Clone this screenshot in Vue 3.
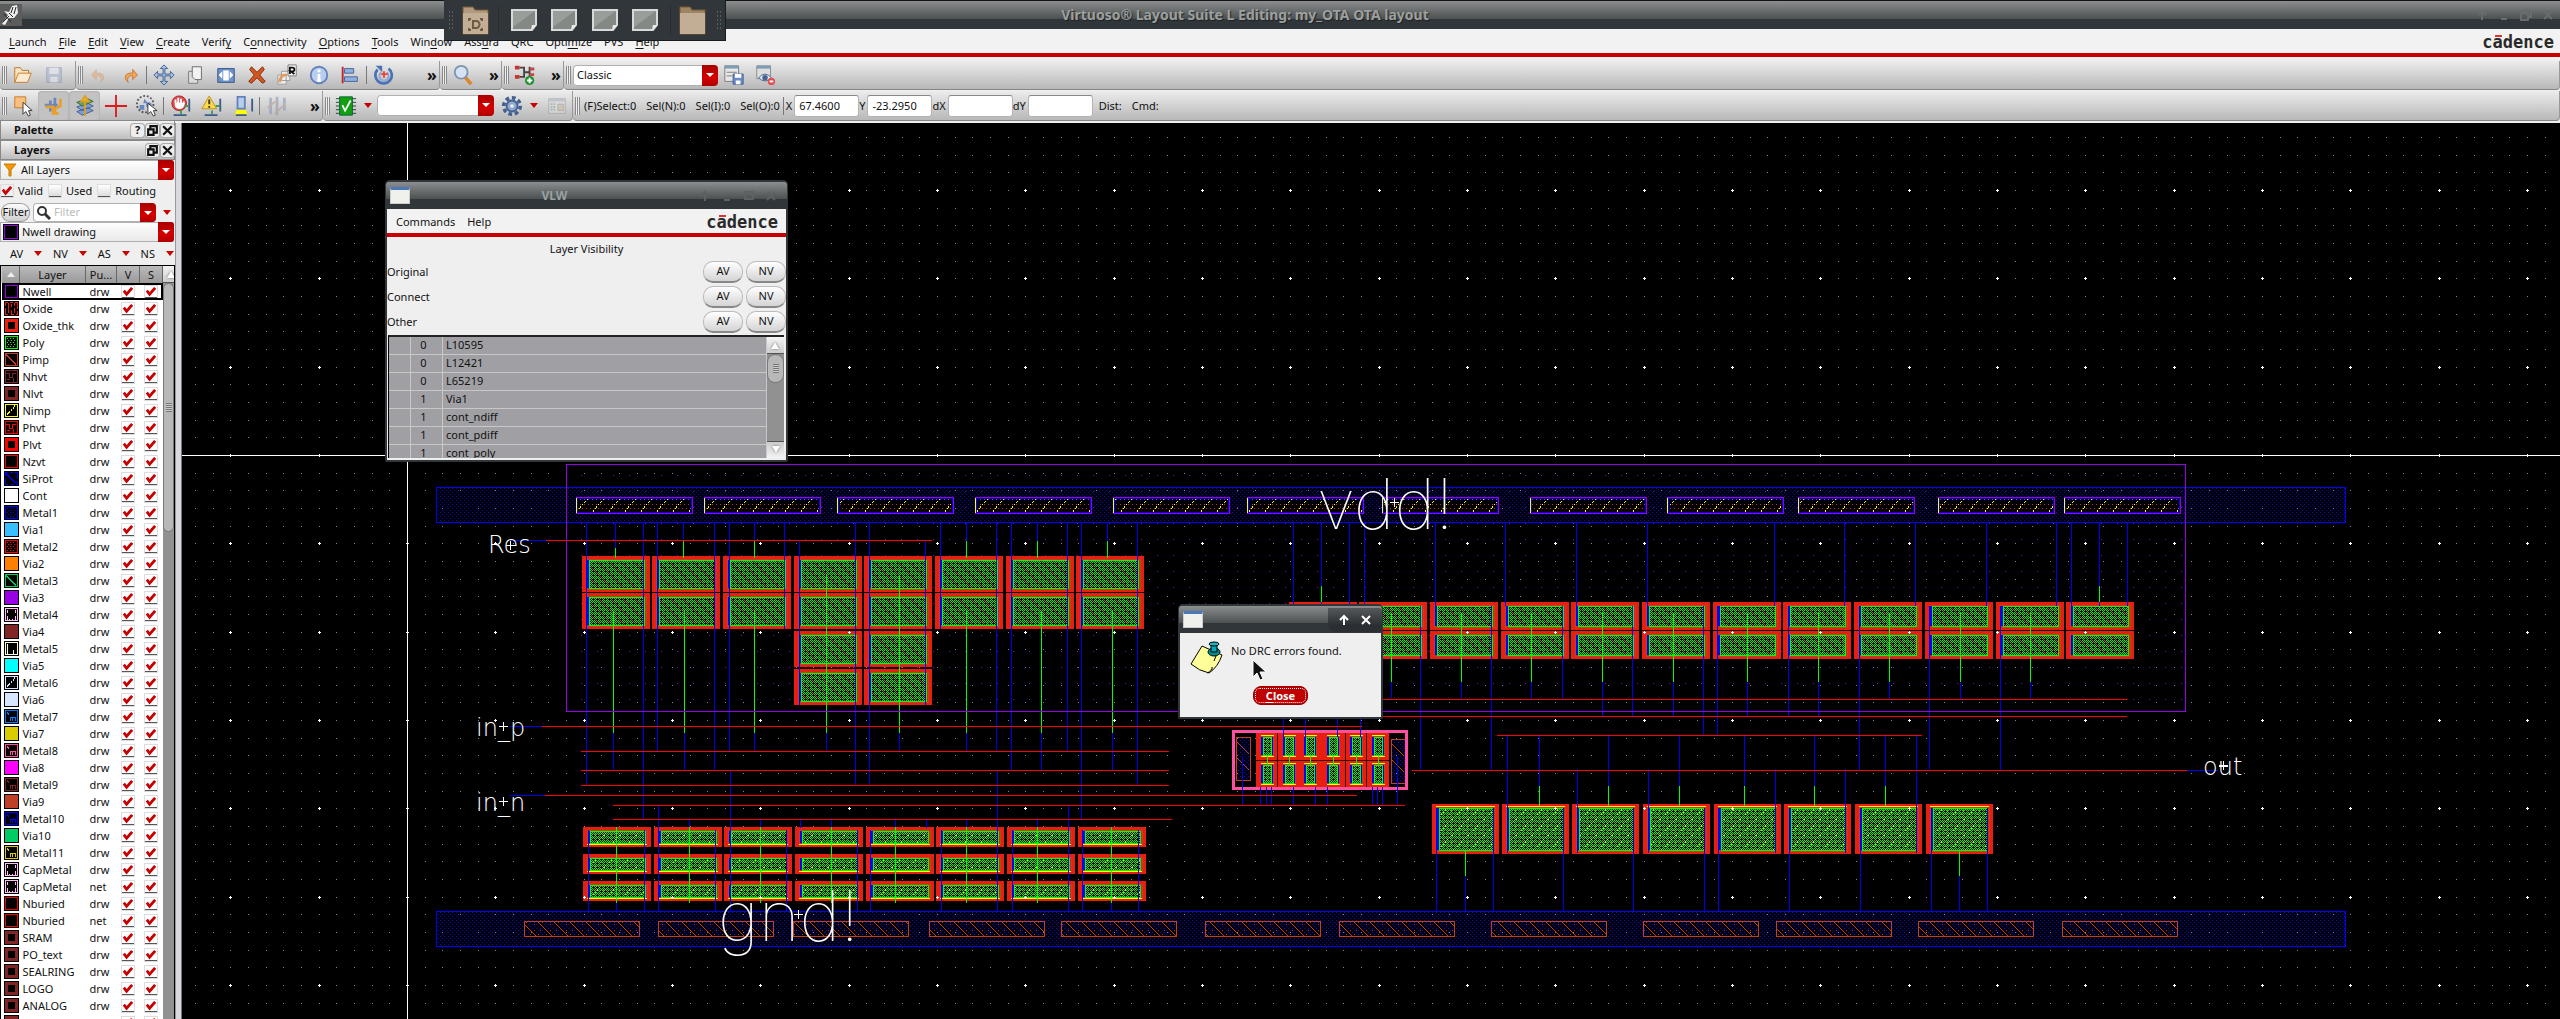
<script setup>
import { ref } from 'vue'

const menuParts = [
  ['', 'L', 'aunch'], ['', 'F', 'ile'], ['', 'E', 'dit'], ['', 'V', 'iew'], ['', 'C', 'reate'], ['Verif', 'y', ''],
  ['C', 'o', 'nnectivity'], ['', 'O', 'ptions'], ['', 'T', 'ools'], ['Win', 'd', 'ow'], ['Ass', 'u', 'ra'],
  ['QRC', '', ''], ['Opti', 'm', 'ize'], ['PVS', '', ''], ['', 'H', 'elp']
]

const palette = [
  ['Nwell', 'drw', '#9400e6', 'outline'], ['Oxide', 'drw', '#e81f0f', 'dash'], ['Oxide_thk', 'drw', '#f01f0f', 'thick'],
  ['Poly', 'drw', '#00ff00', 'dots'], ['Pimp', 'drw', '#c04026', 'diag'], ['Nhvt', 'drw', '#802626', 'maze'],
  ['Nlvt', 'drw', '#802626', 'thick'], ['Nimp', 'drw', '#ffff00', 'up'], ['Phvt', 'drw', '#ff0000', 'maze'],
  ['Plvt', 'drw', '#ff0000', 'thick'], ['Nzvt', 'drw', '#ff0000', 'outline'], ['SiProt', 'drw', '#0000ff', 'dashdiag'],
  ['Cont', 'drw', '#ffffff', 'solid'], ['Metal1', 'drw', '#0000ff', 'dots'], ['Via1', 'drw', '#39bfff', 'solid'],
  ['Metal2', 'drw', '#ff0000', 'dots'], ['Via2', 'drw', '#ff8000', 'solid'], ['Metal3', 'drw', '#00cc66', 'diag'],
  ['Via3', 'drw', '#9900e6', 'solid'], ['Metal4', 'drw', '#ffbff2', 'bars'], ['Via4', 'drw', '#802626', 'solid'],
  ['Metal5', 'drw', '#ffffcc', 'corner'], ['Via5', 'drw', '#00ffff', 'solid'], ['Metal6', 'drw', '#d9e6ff', 'up'],
  ['Via6', 'drw', '#d9e6ff', 'solid'], ['Metal7', 'drw', '#0080ff', 'em'], ['Via7', 'drw', '#d9cc00', 'solid'],
  ['Metal8', 'drw', '#ff4fa0', 'em'], ['Via8', 'drw', '#ff00ff', 'solid'], ['Metal9', 'drw', '#802626', 'em'],
  ['Via9', 'drw', '#bf4026', 'solid'], ['Metal10', 'drw', '#0000ff', 'em'], ['Via10', 'drw', '#00cc66', 'solid'],
  ['Metal11', 'drw', '#d9cc00', 'em'], ['CapMetal', 'drw', '#ffbff2', 'bars'], ['CapMetal', 'net', '#ffbff2', 'bars'],
  ['Nburied', 'drw', '#ff0000', 'outline'], ['Nburied', 'net', '#ff0000', 'outline'], ['SRAM', 'drw', '#802626', 'thick'],
  ['PO_text', 'drw', '#802626', 'thick'], ['SEALRING', 'drw', '#802626', 'thick'], ['LOGO', 'drw', '#802626', 'thick'],
  ['ANALOG', 'drw', '#802626', 'thick'], ['FUSE', 'drw', '#802626', 'thick']
]
const glyphs = {
  dash: 'M4 1v11M7 2v3M7 8v4M10 1v3M10 6v6',
  dots: 'M3 3h1M6 3h1M9 3h1M4 5h1M7 5h1M10 5h1M3 7h1M6 7h1M9 7h1M4 9h1M7 9h1M10 9h1M3 11h1M6 11h1M9 11h1',
  diag: 'M2 2l10 10',
  up: 'M3 11l3-3M7 7l1-1M9 5l2-3',
  maze: 'M1 4h4v4h3V4h4M3 10h3M9 8v4',
  dashdiag: 'M2 2l10 10',
  bars: 'M3 2v3M3 8v4M11 2v3M11 8v4M5 11v2M8 11v2',
  corner: 'M9 8v5M3 2v10',
  em: 'M6 11V8h5v3M8 8v3M3 3l2 2'
}

const vlwRows = [[0, 'L10595'], [0, 'L12421'], [0, 'L65219'], [1, 'Via1'], [1, 'cont_ndiff'], [1, 'cont_pdiff'], [1, 'cont_poly']]

const preset = ref('Classic')
const cursorX = ref('67.4600')
const cursorY = ref('-23.2950')

/* ---- layout canvas ---- */
const V = (x, a, b, w = 1) => `M${x} ${a}h${w}v${b - a}h-${w}z`
const H = (y, a, b, w = 1) => `M${a} ${y}h${b - a}v${w}h-${b - a}z`
const vs = (xs, a, b) => xs.map((x) => V(x, a, b)).join('')

const ox = 407
const oy = 455
const step = 53 / 3
let minor = ''
let major = ''
let ticks = ''
for (let j = -19; j <= 40; j++) {
  const y = oy + Math.round(j * step)
  for (let i = -13; i <= 130; i++) {
    const x = ox + Math.round(i * step)
    if (i % 5 === 0 && j % 5 === 0) major += `M${x - 1} ${y}h3v1h-3zM${x} ${y - 1}h1v3h-1z`
    else minor += `M${x} ${y}h1v1h-1z`
  }
}
for (let i = -10; i <= 130; i += 5) ticks += V(ox + Math.round(i * step), oy - 1, oy + 2)

const topTaps = [576, 704, 837, 975, 1113, 1247, 1382, 1530, 1667, 1798, 1938, 2064]
const bottomTaps = [524, 658, 793, 929, 1061, 1205, 1339, 1491, 1643, 1776, 1918, 2062]

const cells = []
const addCells = (xs, ys, w, h, kind) => xs.forEach((x) => ys.forEach((y) => cells.push({ x, y, w, h, kind })))
const colsA = [582, 652, 723, 794, 864, 935, 1006, 1076]
const colsC = [583, 654, 724, 795, 866, 936, 1007, 1078]
const colsB = [1289, 1359, 1430, 1501, 1571, 1642, 1713, 1783, 1854, 1925, 1996, 2066]
const colsD = [1432, 1502, 1572, 1643, 1714, 1784, 1855, 1926]
addCells(colsA, [556, 593], 68, 36, 'n')
addCells([794, 864], [631, 669], 68, 36, 'n')
addCells(colsB, [602, 631], 68, 28, 'n')
addCells(colsC, [827, 854, 881], 68, 20, 'p')
addCells(colsD, [804], 67, 50, 'p')
const pair = [1267, 1289, 1310, 1333, 1356, 1378]

const blue =
  vs([586, 855, 869, 1137], 523, 785) + vs([643, 1081], 523, 819) + vs([657, 729, 996, 1067], 523, 751) +
  vs([714, 1011], 523, 770) + vs([784, 940], 523, 629) + vs([799, 925], 540, 705) +
  vs([615], 523, 548) + vs([683, 754, 966, 1037, 1107], 523, 545) +
  vs([613, 684, 1041, 1112], 733, 770) + vs([754, 826, 899, 966], 733, 751) +
  vs([658, 1068], 805, 911) + vs([730, 997], 770, 911) +
  vs([689, 760, 800, 831, 895, 926, 966, 1037], 818, 828) +
  vs([588, 616, 644, 715, 786, 857, 870, 941, 1012, 1082, 1111, 1138], 830, 911) +
  vs([1293, 1321, 1349, 1364, 1435, 1505, 1576, 1647, 1774, 1844, 1915, 1986, 2056, 2071, 2099, 2127], 523, 606) +
  vs([1391, 1461, 1531, 1889], 682, 699) + vs([1562], 606, 699) +
  vs([1602, 1673, 1747, 1818], 682, 716) + vs([1632, 1788], 606, 716) +
  vs([1703, 1717], 606, 735) + vs([1420, 1491, 1859, 1929, 2000], 606, 770) + vs([1960, 2030], 682, 699) +
  vs([1539, 1608, 1679, 1744, 1814, 1885], 734, 786) + vs([1507, 1916], 734, 853) +
  vs([1577, 1648, 1775, 1845], 769, 853) +
  vs([1465, 1959], 876, 911) + vs([1436, 1493, 1563, 1633, 1704, 1718, 1789, 1860, 1931, 1987], 808, 911) +
  vs([1283, 1305, 1337, 1360], 719, 737) + vs([1242, 1397], 757, 805) +
  vs([1260, 1266, 1271, 1293, 1315, 1327, 1372, 1377, 1382], 787, 805) +
  H(540, 510, 546) + H(726, 510, 542) + H(795, 510, 545) + H(770, 2187, 2218)
const green =
  vs([613, 684, 754, 966, 1041, 1112], 611, 733) + vs([826, 899], 575, 733) + vs([615], 548, 558) +
  vs([683, 754, 966, 1037, 1107], 541, 558) +
  vs([616, 689, 760, 831, 895, 966, 1037, 1111], 827, 903) +
  vs([1321, 2099], 586, 602) + vs([1391, 1461, 1531, 1602, 1673, 1747, 1818, 1889, 1960, 2030], 613, 682) +
  vs([1539, 1608, 1679, 1744, 1814, 1885], 786, 806) + vs([1465, 1959], 851, 876) +
  vs([1267, 1289, 1310, 1333, 1356, 1378], 756, 765)
const red =
  H(540, 546, 932) + H(726, 542, 1362) + H(751, 581, 1169) + H(770, 581, 1169) + H(785, 581, 1169) +
  H(795, 545, 1357) + H(805, 613, 1405) + H(819, 613, 1172) + H(699, 1300, 2127) + H(716, 1300, 2127) +
  H(735, 1497, 1922) + H(770, 1412, 2187)
</script>

<template>
  <div class="app">
    <header class="titlebar">
      <svg class="applogo" width="22" height="22" viewBox="0 0 22 22"><rect width="22" height="22" fill="#5c5c5c" /><path d="M2 20L8 11L4 7L9 8L12 2L17 1L18 9L14 14L9 14L5 21z" fill="#eee" /><path d="M3 18l6-6M9 9l4 4M13 3l-2 6M16 3l-2 7M4 10l7 8" stroke="#222" fill="none" /></svg>
      <h1>Virtuoso® Layout Suite L Editing: my_OTA OTA layout</h1>
      <div class="wctl">
        <button aria-label="Shade"><svg width="12" height="12" viewBox="0 0 12 12"><path d="M6 11V2M2 6l4-4 4 4" /></svg></button>
        <button aria-label="Minimize"><svg width="12" height="12" viewBox="0 0 12 12"><path d="M3 10h6" /></svg></button>
        <button aria-label="Restore"><svg width="12" height="12" viewBox="0 0 12 12"><path d="M1 4h7v7H1zM4 4V1h7v7H8" /></svg></button>
        <button aria-label="Close window"><svg width="12" height="12" viewBox="0 0 12 12"><path d="M2 2l8 8M10 2l-8 8" /></svg></button>
      </div>
    </header>

    <nav class="menubar">
      <button v-for="m in menuParts" :key="m.join('')">{{ m[0] }}<u>{{ m[1] }}</u>{{ m[2] }}</button>
      <span class="brand">c<span class="macron">a</span>dence</span>
    </nav>

    <div class="toolbar">
      <div class="group">
        <i class="grip"></i>
        <button class="tool" aria-label="Open"><svg viewBox="0 0 24 24"><path d="M3 20V4h6l2 3h7v4" fill="#fbe3c0" stroke="#b8752c" /><path d="M3 20l4-10h14l-4 10z" fill="#fde9cf" stroke="#c77a25" /></svg></button>
        <button class="tool dim" aria-label="Save"><svg viewBox="0 0 24 24"><path d="M4 4h16v16H4z" fill="#a9b5cf" stroke="#8290b0" /><path d="M7 4h10v7H7zM8 14h8v6H8z" fill="#e3e6ee" /></svg></button>
        <i class="tail"></i>
      </div>
      <div class="group">
        <i class="grip"></i>
        <button class="tool dim" aria-label="Undo"><svg viewBox="0 0 24 24"><path d="M14 20c6-5 3-11-5-10V6l-5 6 5 5v-4c4-1 7 2 5 7z" fill="#e2ab83" stroke="#d09a70" /></svg></button>
        <button class="tool" aria-label="Redo"><svg viewBox="0 0 24 24"><path d="M10 20c-6-5-3-11 5-10V6l5 6-5 5v-4c-4-1-7 2-5 7z" fill="#f2a55c" stroke="#c9722a" /></svg></button>
        <i class="sep"></i>
        <button class="tool" aria-label="Move"><svg viewBox="0 0 24 24"><path d="M12 1l4 4h-3v6h6V8l4 4-4 4v-3h-6v6h3l-4 4-4-4h3v-6H5v3l-4-4 4-4v3h6V5H8z" fill="#a9c0e0" stroke="#3f5f92" /></svg></button>
        <button class="tool" aria-label="Copy"><svg viewBox="0 0 24 24"><path d="M5 8h10v13H5z" fill="#ddd" stroke="#777" /><path d="M9 3h10v14h-7l-3-3z" fill="#f2f2f2" stroke="#666" /></svg></button>
        <button class="tool" aria-label="Stretch"><svg viewBox="0 0 24 24"><path d="M3 5h18v15H3z" fill="#6d93cc" stroke="#33507f" /><path d="M9 7h6v11H9z" fill="#fff" /><path d="M4 12l4-4v8zM20 12l-4-4v8z" fill="#fff" /></svg></button>
        <button class="tool" aria-label="Delete"><svg viewBox="0 0 24 24"><path d="M6 3l6 6 6-6 2 3-5 6 6 7-3 2-6-6-6 6-3-2 6-7-5-6z" fill="#d2561f" stroke="#7c2a08" /></svg></button>
        <button class="tool" aria-label="Repeat copy"><svg viewBox="0 0 24 24"><path d="M1 12h9v10H1zM5 8h9v10H5z" fill="#eee" stroke="#999" /><path d="M12 1h9v12h-9z" fill="#f8f8f8" stroke="#777" /><path d="M14 11V4h3a2 2 0 0 1 0 4h-2l4 3" stroke="#111" stroke-width="2" fill="none" /><path d="M3 20c0-6 4-9 8-8" stroke="#e29a60" stroke-width="3" fill="none" /></svg></button>
        <button class="tool" aria-label="Properties"><svg viewBox="0 0 24 24"><circle cx="12" cy="12" r="9" fill="#b9cdef" stroke="#6382bd" stroke-width="2" /><path d="M12 6v3M12 11v7M10 18h4" stroke="#fff" stroke-width="3" /></svg></button>
        <button class="tool" aria-label="Align"><svg viewBox="0 0 24 24"><path d="M4 3v18" stroke="#c02030" stroke-width="2" /><path d="M6 5h10v5H6zM6 14h14v5H6z" fill="#8fb0e0" stroke="#44608f" /></svg></button>
        <i class="sep"></i>
        <button class="tool" aria-label="Rotate"><svg viewBox="0 0 24 24"><path d="M5 6a9 9 0 1 0 12-1" fill="none" stroke="#4a72b8" stroke-width="3" /><path d="M9 9a5 5 0 1 0 6 0" fill="none" stroke="#88a6d8" stroke-width="2" /><path d="M3 2h7v7z" fill="#4a72b8" /><path d="M9 11h7M12 8v7" stroke="#f04030" stroke-width="2" /></svg></button>
        <b class="more far">»</b>
      </div>
      <div class="group">
        <i class="grip"></i>
        <button class="tool" aria-label="Zoom"><svg viewBox="0 0 24 24"><path d="M14 14l7 8" stroke="#d8852c" stroke-width="4" /><circle cx="10" cy="9" r="7" fill="#d4e2f4" stroke="#7e93ad" stroke-width="2" /></svg></button>
        <b class="more">»</b>
      </div>
      <div class="group">
        <i class="grip"></i>
        <button class="tool" aria-label="Create wire"><svg viewBox="0 0 24 24"><path d="M1 2h5v4H1zM1 12h5v4H1z" fill="#c33" /><path d="M6 4h5v10H6M11 9h6M17 3v12M17 5h5" stroke="#444" stroke-width="2" fill="none" /><path d="M17 4h5v3h-5zM17 10h5v3h-5z" fill="#c44" /><circle cx="17" cy="18" r="5" fill="#18902c" /><path d="M14 18h6M17 15v6" stroke="#fff" stroke-width="2" /></svg></button>
        <b class="more">»</b>
      </div>
      <div class="group grow">
        <i class="grip"></i>
        <span class="combo wide"><select v-model="preset" aria-label="Workspace"><option>Classic</option></select><i class="drop"></i></span>
        <button class="tool" aria-label="Save workspace"><svg viewBox="0 0 24 24"><path d="M2 2h15v17H2z" fill="#e8e8e8" stroke="#777" /><path d="M2 2h15v3H2z" fill="#7d9cb8" /><path d="M4 9h11M4 13h6" stroke="#777" /><path d="M11 11h11v11H11z" fill="#6f8cc6" stroke="#3e5a98" /><path d="M13 11h7v4h-7zM14 18h5v4h-5z" fill="#fff" /></svg></button>
        <button class="tool" aria-label="Delete workspace"><svg viewBox="0 0 24 24"><path d="M3 2h15v14H3z" fill="#ddd" stroke="#888" /><path d="M3 2h15v3H3z" fill="#7d9cb8" /><path d="M5 15q7-8 14 0q-7 7-14 0z" fill="#dfe8f4" stroke="#47628f" /><circle cx="12" cy="15" r="3" fill="#47628f" /><circle cx="19" cy="19" r="4" fill="#e05050" /><path d="M17 19h4" stroke="#fff" stroke-width="2" /></svg></button>
      </div>
    </div>

    <div class="toolbar">
      <div class="group">
        <i class="grip"></i>
        <button class="tool" aria-label="Select"><svg viewBox="0 0 24 24"><path d="M3 2h12v12H3z" fill="#f9bf7c" stroke="#c07a28" /><path d="M12 8v13l3-3 3 5 2-1-2-5h4z" fill="#fff" stroke="#333" /></svg></button>
        <button class="tool on" aria-label="Partial select"><svg viewBox="0 0 24 24"><path d="M2 11h14M8 6v12M13 3v12" stroke="#6a86bd" stroke-width="3" /><path d="M3 13h8v7h6M19 4v8l-6 3v4" stroke="#e8a02a" stroke-width="3" fill="none" /></svg></button>
        <button class="tool on" aria-label="Layer scope"><svg viewBox="0 0 24 24"><path d="M3 18l12-4 6 3-12 5zM3 13l12-4 6 3-12 5z" fill="#7f9fd0" stroke="#3f5c8c" /><path d="M3 8l12-4 6 3-12 5z" fill="#6fa060" stroke="#40683a" /><path d="M12 23V5M8 7l4-6 4 6z" stroke="#e0a020" stroke-width="2" fill="#f5c24a" /></svg></button>
        <button class="tool" aria-label="Crosshair"><svg viewBox="0 0 24 24"><path d="M12 0v24M0 12h24" stroke="#e01818" stroke-width="2" /></svg></button>
        <button class="tool" aria-label="Area select"><svg viewBox="0 0 24 24"><circle cx="10" cy="10" r="9" fill="none" stroke="#555" stroke-width="2" stroke-dasharray="2 2" /><path d="M4 11h5v5H4zM9 4l4 5H8z" fill="#6587c4" /><circle cx="14" cy="11" r="3" fill="#6587c4" /><path d="M13 9v12l3-3 3 5 2-1-2-5h4z" fill="#fff" stroke="#333" /></svg></button>
        <i class="sep"></i>
        <button class="tool" aria-label="Stop rule"><svg viewBox="0 0 24 24"><path d="M21 4v14M4 22h14" stroke="#3d5a8c" stroke-width="2" /><circle cx="10" cy="9" r="8" fill="#e04a4a" stroke="#a02020" /><path d="M6 9V5M9 9V3M12 9V4M15 10V7M6 9c0 7 8 7 9 1z" stroke="#fff" stroke-width="2" fill="#fff" /><path d="M16 12h4M12 17v4" stroke="#3aa04a" stroke-width="2" /></svg></button>
        <button class="tool" aria-label="Warn rule"><svg viewBox="0 0 24 24"><path d="M21 4v14M4 22h14" stroke="#3d5a8c" stroke-width="2" /><path d="M9 1l8 14H1z" fill="#ffd94a" stroke="#b8901c" /><path d="M9 5v5M9 12v2" stroke="#333" stroke-width="2" /><path d="M16 12h4M12 17v4" stroke="#3aa04a" stroke-width="2" /></svg></button>
        <button class="tool" aria-label="Highlight"><svg viewBox="0 0 24 24"><path d="M6 2h8v13H6z" fill="#b9cdec" stroke="#6382bd" stroke-width="2" /><path d="M5 16h10l2 6H3z" fill="#ffff00" /><path d="M22 4v14M4 22h12" stroke="#3d5a8c" stroke-width="2" /></svg></button>
        <i class="sep"></i>
        <button class="tool dim" aria-label="Edit guides"><svg viewBox="0 0 24 24"><path d="M5 3v18M12 2v20M20 3v14" stroke="#8c9ab5" stroke-width="3" /><path d="M2 14l8-7M10 20l11-10" stroke="#b89a88" stroke-width="2" /></svg></button>
        <b class="more mid">»</b>
      </div>
      <div class="group">
        <i class="grip"></i>
        <button class="tool" aria-label="Check design"><svg viewBox="0 0 24 24"><path d="M1 4h22M1 8h22M1 12h22M1 16h22M1 20h22" stroke="#333" /><path d="M5 2h14v20H5z" fill="#12a012" stroke="#063" /><path d="M8 11l3 6 6-11" stroke="#fff" stroke-width="2" fill="none" /></svg></button>
        <i class="tri"></i>
        <span class="combo rule"><select aria-label="Rule"><option></option></select><i class="drop"></i></span>
        <button class="tool" aria-label="Options"><svg viewBox="0 0 24 24"><circle cx="12" cy="12" r="9" fill="none" stroke="#43618f" stroke-width="4" stroke-dasharray="4 3" /><circle cx="12" cy="12" r="6" fill="#8fa9d0" stroke="#43618f" stroke-width="2" /><circle cx="12" cy="12" r="2" fill="#eee" /></svg></button>
        <i class="tri"></i>
        <button class="tool dim" aria-label="Form"><svg viewBox="0 0 24 24"><path d="M3 4h18v16H3z" fill="#ddd" stroke="#999" /><path d="M3 4h18v3H3z" fill="#aab4c0" /><path d="M5 10h5M5 13h5M5 16h5" stroke="#8a9" stroke-width="2" stroke-dasharray="2 1" /><path d="M13 10h6v7h-6z" fill="#cfc09a" stroke="#999" /></svg></button>
      </div>
      <div class="group grow status">
        <i class="grip"></i>
        <span class="st first">(F)Select:0</span><span class="st">Sel(N):0</span><span class="st">Sel(I):0</span><span class="st">Sel(O):0</span>
        <i class="bar"></i>
        <label>X<input v-model="cursorX" /></label>
        <label>Y<input v-model="cursorY" /></label>
        <label>dX<input /></label>
        <label>dY<input /></label>
        <span class="st dist">Dist:</span><span class="st">Cmd:</span>
      </div>
    </div>

    <main class="body">
      <aside class="side">
        <div class="dock"><b>Palette</b><button aria-label="Help">?</button><button aria-label="Float palette"><svg viewBox="0 0 12 12"><path d="M2 5h5v5H2zM4 5V2h6v6H7" /></svg></button><button aria-label="Close palette"><svg viewBox="0 0 12 12"><path d="M2 2l8 8M10 2l-8 8" /></svg></button></div>
        <div class="dock"><b>Layers</b><button aria-label="Float layers"><svg viewBox="0 0 12 12"><path d="M2 5h5v5H2zM4 5V2h6v6H7" /></svg></button><button aria-label="Close layers"><svg viewBox="0 0 12 12"><path d="M2 2l8 8M10 2l-8 8" /></svg></button></div>
        <div class="combo full">
          <svg class="lead" width="14" height="14" viewBox="0 0 14 14"><path d="M1 1h12L8 7v6H6V7z" fill="#f59a00" stroke="#c87800" /></svg>
          <select aria-label="Layer set"><option>All Layers</option></select><i class="drop"></i>
        </div>
        <div class="checks">
          <label><input type="checkbox" checked />Valid</label>
          <label><input type="checkbox" />Used</label>
          <label><input type="checkbox" />Routing</label>
        </div>
        <div class="filter">
          <button class="pill">Filter</button>
          <span class="combo search">
            <svg class="lead" width="15" height="15" viewBox="0 0 15 15"><circle cx="6" cy="6" r="4" fill="none" stroke="#333" stroke-width="2" /><path d="M9 9l5 5" stroke="#333" stroke-width="3" /></svg>
            <input placeholder="Filter" aria-label="Filter layers" /><i class="drop"></i>
          </span>
          <i class="tri"></i>
        </div>
        <div class="combo full">
          <i class="chip"></i>
          <select aria-label="Current layer"><option>Nwell drawing</option></select><i class="drop"></i>
        </div>
        <div class="vis">
          <button v-for="n in ['AV', 'NV', 'AS', 'NS']" :key="n">{{ n }}<i class="tri"></i></button>
        </div>
        <div class="list">
          <table>
            <thead>
              <tr><th class="c0"><i class="up"></i></th><th class="c1">Layer</th><th class="c2">Pu...</th><th class="c3">V</th><th class="c4">S</th></tr>
            </thead>
            <tbody>
              <tr v-for="(l, i) in palette" :key="i" :class="{ sel: i === 0 }">
                <td>
                  <svg class="sw" width="15" height="15" viewBox="0 0 15 15" shape-rendering="crispEdges">
                    <rect width="15" height="15" fill="#000" />
                    <rect x="1" y="1" width="13" height="13" :fill="l[2]" />
                    <template v-if="l[3] !== 'solid'">
                      <rect v-if="l[3] === 'thick'" x="4" y="4" width="7" height="7" fill="#000" />
                      <rect v-else x="2" y="2" width="11" height="11" fill="#000" />
                      <path v-if="glyphs[l[3]]" :d="glyphs[l[3]]" :stroke="l[2]" fill="none" transform="translate(0 .5)" />
                      <path v-if="l[3].startsWith('dash')" d="M4 1h2M9 1h2M4 13h3M10 13h2M1 5v2M13 8v2" stroke="#000" stroke-width="2" />
                    </template>
                  </svg>
                </td>
                <td class="nm">{{ l[0] }}</td>
                <td class="pu">{{ l[1] }}</td>
                <td class="ck"><input type="checkbox" checked :aria-label="l[0] + ' visible'" /></td>
                <td class="ck"><input type="checkbox" checked :aria-label="l[0] + ' selectable'" /></td>
              </tr>
            </tbody>
          </table>
          <div class="scroll"><i class="sbtn"></i><i class="thumb tall"></i></div>
        </div>
      </aside>
      <div class="split"></div>

      <section class="canvas">
        <svg class="art" width="100%" height="100%" shape-rendering="crispEdges">
          <defs>
            <pattern id="well" x="581" y="475" width="16" height="16" patternUnits="userSpaceOnUse"><path d="M0 0h1v1h-1z" fill="#8a00d8" /></pattern>
            <pattern id="metalTop" width="4" height="4" patternUnits="userSpaceOnUse"><path d="M0 0h1v1h-1zM2 2h1v1h-1z" fill="#0000e0" /></pattern>
            <pattern id="metalLow" width="4" height="4" patternUnits="userSpaceOnUse"><path d="M0 0h1v1h-1zM2 2h1v1h-1z" fill="#0000ff" /></pattern>
            <pattern id="tapN" width="16" height="16" patternUnits="userSpaceOnUse"><path d="M0 3h1v1h-1zM4 3h1v1h-1zM8 3h1v1h-1zM12 3h1v1h-1zM0 8h1v1h-1zM4 8h1v1h-1zM8 8h1v1h-1zM12 8h1v1h-1zM2 12h1v1h-1zM6 12h1v1h-1zM10 12h1v1h-1zM14 12h1v1h-1z" fill="#c83020" /><path d="M1 14h1v2h-1zM3 12h1v1h-1zM4 10h1v2h-1zM6 8h1v1h-1zM8 6h1v1h-1zM9 5h1v1h-1zM11 3h1v1h-1zM13 1h1v1h-1zM14 0h1v1h-1z" fill="#ffff00" /></pattern>
            <pattern id="tapP" width="16" height="16" patternUnits="userSpaceOnUse"><path d="M0 0L16 16" stroke="#c04026" fill="none" /><path d="M2 6h1v1h-1zM6 2h1v1h-1zM10 6h1v1h-1zM14 10h1v1h-1zM6 12h1v1h-1zM12 2h1v1h-1z" fill="#e02018" /></pattern>
            <pattern id="poly" width="4" height="4" patternUnits="userSpaceOnUse"><rect width="4" height="4" fill="#000" /><path d="M0 0h1v1h-1zM2 0h1v1h-1zM1 1h1v1h-1zM0 2h1v1h-1zM2 2h1v1h-1zM3 3h1v1h-1zM3 1h1v1h-1z" fill="#00f800" /></pattern>
            <pattern id="diagN" width="12" height="12" patternUnits="userSpaceOnUse"><path d="M0 0h1v1h-1zM1 1h1v1h-1zM3 3h1v1h-1zM4 4h1v1h-1zM5 5h1v1h-1zM7 7h1v1h-1zM8 8h1v1h-1zM9 9h1v1h-1zM11 11h1v1h-1z" fill="#d04026" /></pattern>
            <pattern id="diagP" width="16" height="16" patternUnits="userSpaceOnUse"><path d="M1 14h1v1h-1zM3 12h1v1h-1zM5 9h1v2h-1zM7 7h1v1h-1zM9 5h1v1h-1zM11 3h2v1h-2zM13 1h1v1h-1z" fill="#e8e000" /><path d="M3 2h1v1h-1zM7 3h1v1h-1zM11 10h1v1h-1zM15 11h1v1h-1zM9 14h1v1h-1zM14 6h1v1h-1zM2 8h1v1h-1z" fill="#e85010" /></pattern>
          </defs>
          <g transform="translate(-182 -123)">
            <path :d="minor" fill="#85858f" />
            <rect x="566" y="464" width="1619" height="247" fill="url(#well)" />
            <g stroke="#0000ff">
              <rect x="436" y="487" width="1909" height="35" fill="url(#metalTop)" />
              <rect x="436" y="911" width="1909" height="35" fill="url(#metalLow)" />
            </g>
            <g v-for="x in topTaps" :key="'t' + x">
              <rect :x="x" y="497" width="117" height="17" fill="#9400e6" />
              <rect :x="x + 1" y="498" width="115" height="15" fill="#0000e0" />
              <rect :x="x + 2" y="499" width="113" height="13" fill="#000" />
              <rect :x="x + 2" y="499" width="113" height="13" fill="url(#tapN)" />
              <path :d="'M' + x + ' 498h1v15h-1z'" fill="#ffff00" />
            </g>
            <g v-for="x in bottomTaps" :key="'b' + x">
              <rect :x="x" y="921" width="115" height="15" fill="url(#tapP)" stroke="#c04026" />
            </g>
            <g v-for="(c, i) in cells" :key="i">
              <rect :x="c.x" :y="c.y" :width="c.w" :height="c.h" fill="#e81f0f" />
              <rect :x="c.x + 4" :y="c.y + 3" :width="c.w - 8" :height="c.h - 6" fill="none" stroke="#c04026" />
              <path v-if="c.kind === 'p'" :d="'M' + (c.x + 4) + ' ' + (c.y + (c.h > 30 ? 2 : c.h - 3)) + 'h' + (c.w - 8) + 'v1h-' + (c.w - 8) + 'z'" fill="#ffff00" />
              <rect :x="c.x + 5" :y="c.y + 4" :width="c.w - 10" :height="c.h - 8" fill="#0000ff" />
              <rect :x="c.x + 7" :y="c.y + 4" :width="c.w - 13" :height="c.h - 8" fill="url(#poly)" />
              <rect :x="c.x + 7" :y="c.y + 4" :width="c.w - 13" :height="c.h - 8" :fill="c.kind === 'p' ? 'url(#diagP)' : 'url(#diagN)'" stroke="#00ff00" />
            </g>
            <rect x="1256" y="733" width="133" height="54" fill="#e81f0f" />
            <path d="M1256 760h133v1h-133zM1277 733h1v54h-1zM1345 733h1v54h-1zM1366 733h1v54h-1z" fill="#300" />
            <g v-for="x in pair" :key="'p' + x">
              <template v-for="y in [737, 765]" :key="y">
                <rect :x="x - 6" :y="y - 2" width="13" height="22" fill="#ffff00" />
                <rect :x="x - 6" :y="y - 1" width="13" height="20" fill="#c04026" />
                <rect :x="x - 6" :y="y" width="12" height="18" fill="#0000ff" />
                <rect :x="x - 4" :y="y" width="8" height="18" fill="url(#poly)" stroke="#00ff00" />
              </template>
            </g>
            <g stroke="#c04026">
              <rect x="1236" y="737" width="14" height="43" fill="url(#metalLow)" />
              <rect x="1391" y="739" width="14" height="44" fill="url(#metalLow)" />
              <path d="M1237 742l12 12M1237 758l12 12M1392 744l12 12M1392 760l12 12" />
            </g>
            <rect x="1233" y="731" width="173" height="57" fill="none" stroke="#ff4fa0" stroke-width="3" />
            <path :d="blue" fill="#0000f0" />
            <path :d="green" fill="#00ff00" />
            <path :d="red" fill="#ff0000" />
            <rect x="566" y="464" width="1619" height="247" fill="none" stroke="#9400e6" />
            <path :d="major" fill="#fff" />
            <path :d="ticks" fill="#fff" />
            <path d="M407 123h1v2000h-1zM182 455h4000v1h-4000z" fill="#fff" />
            <g class="pins">
              <text x="488" y="553">Res</text><text x="476" y="736">in_p</text><text x="476" y="811">in_n</text><text x="2203" y="775">out</text>
              <path d="M506 545h9v1h-9zM510 541h1v9h-1zM499 726h9v1h-9zM503 722h1v9h-1zM499 801h9v1h-9zM503 797h1v9h-1zM2219 765h9v2h-9zM2223 761h1v9h-1zM1390 502h9v1h-9zM1394 498h1v9h-1zM794 914h9v1h-9zM798 910h1v9h-1z" />
              <text class="big" x="1317" y="529">vdd!</text><text class="big" x="718" y="941">gnd!</text>
            </g>
          </g>
        </svg>
      </section>
    </main>

    <div class="panel">
      <i class="dotgrip"></i>
      <svg width="28" height="32" viewBox="0 0 28 32"><path d="M1 3h10l2 3h13v24H1z" fill="#b19a7d" stroke="#7a5b37" /><path d="M1 9h25v21H1z" fill="#c2ae94" /><path d="M9 15h-2v2M18 15h2v2M9 26h-2v-2M18 26h2v-2M11 17h3a3 3 0 0 1 0 7h-3z" stroke="#6e5a42" fill="none" stroke-width="2" /></svg>
      <i class="psep"></i>
      <svg v-for="n in 4" :key="n" class="scr" width="28" height="24" viewBox="0 0 28 24"><path d="M2 2h24v15l-4 5H2z" fill="#858985" stroke="#d8dad8" stroke-width="2" /><path d="M3 3h22L3 19z" fill="#9a9e9a" /><path d="M21 22l1-5h4z" fill="#eee" /></svg>
      <i class="psep"></i>
      <svg width="28" height="32" viewBox="0 0 28 32"><path d="M1 3h10l2 3h13v24H1z" fill="#9d8465" stroke="#7a5b37" /><path d="M1 9h25v21H1z" fill="#c2ae94" /></svg>
      <i class="dotgrip"></i>
    </div>

    <section class="win vlw">
      <header><i class="wicon"></i><b>VLW</b>
        <div class="wctl">
          <button aria-label="Shade VLW"><svg width="12" height="12" viewBox="0 0 12 12"><path d="M6 11V2M2 6l4-4 4 4" /></svg></button>
          <button aria-label="Minimize VLW"><svg width="12" height="12" viewBox="0 0 12 12"><path d="M3 10h6" /></svg></button>
          <button aria-label="Maximize VLW"><svg width="12" height="12" viewBox="0 0 12 12"><path d="M2 2h8v7H2z" /></svg></button>
          <button aria-label="Close VLW"><svg width="12" height="12" viewBox="0 0 12 12"><path d="M2 2l8 8M10 2l-8 8" /></svg></button>
        </div>
      </header>
      <nav><button>Commands</button><button>Help</button><span class="brand">c<span class="macron">a</span>dence</span></nav>
      <h2>Layer Visibility</h2>
      <div v-for="n in ['Original', 'Connect', 'Other']" :key="n" class="vrow"><span>{{ n }}</span><button>AV</button><button>NV</button></div>
      <div class="vlist">
        <table><tbody><tr v-for="r in vlwRows" :key="r[1]"><td class="a"></td><td class="b">{{ r[0] }}</td><td>{{ r[1] }}</td></tr></tbody></table>
        <div class="scroll"><i class="sbtn"></i><i class="thumb"></i><i class="sbtn down"></i></div>
      </div>
    </section>

    <section class="win drc" role="dialog">
      <header><i class="wicon"></i>
        <div class="wctl lit">
          <button aria-label="Shade dialog"><svg width="12" height="12" viewBox="0 0 12 12"><path d="M6 11V2M2 6l4-4 4 4" /></svg></button>
          <button aria-label="Close dialog"><svg width="12" height="12" viewBox="0 0 12 12"><path d="M2 2l8 8M10 2l-8 8" /></svg></button>
        </div>
      </header>
      <div class="msg">
        <svg width="34" height="34" viewBox="0 0 34 34"><path d="M12 5L1 23Q9 30 19 32Q28 26 32 14z" fill="#ffff99" stroke="#000" /><path d="M17 32q6-2 5-6" fill="#ddd08a" stroke="#000" /><path d="M24 20l2-5" stroke="#000" /><ellipse cx="24" cy="11" rx="6" ry="4" fill="#008b95" stroke="#000" /><path d="M21 4h6v7h-6z" fill="#00a8b0" stroke="#000" /><ellipse cx="24" cy="3" rx="5" ry="2" fill="#20b8c0" stroke="#000" /></svg>
        <p>No DRC errors found.</p>
      </div>
      <button class="close"><span><u>C</u>lose</span></button>
      <svg class="cursor" width="16" height="22" viewBox="0 0 16 22"><path d="M1 1v17l4-4 3 7 3-1-3-7h6z" fill="#111" stroke="#fff" /></svg>
    </section>
  </div>
</template>

<style>
html, body { margin: 0; background: #000; }
</style>

<style scoped>
.app { position: relative; display: flex; flex-direction: column; height: 100vh; overflow: hidden; font-family: "Noto Sans", "Open Sans", sans-serif; font-size: 11px; line-height: 16px; color: #111; background: #efefef; }
button, input, select { font: inherit; color: inherit; margin: 0; padding: 0; border: 0; background: none; box-sizing: border-box; }
i { font-style: normal; display: block; flex: none; }
u { text-underline-offset: 2px; }

.titlebar { display: flex; align-items: center; height: 29px; flex: none; background: linear-gradient(#101214 0 1px, #8c8e8f 1px, #4b5051 19px, #31363a 19px, #31363a); }
.titlebar h1 { flex: 1; margin: 0 8px 0 0; text-align: center; font-size: 14px; font-weight: 700; color: #9ba0a1; text-shadow: 1px 1px 1px #222; }
.wctl { display: flex; gap: 10px; margin-right: 6px; }
.wctl button { width: 12px; height: 12px; }
.wctl svg { display: block; fill: none; stroke: #686c6d; stroke-width: 2; }
.wctl.lit svg { stroke: #fff; }

.menubar { display: flex; align-items: center; height: 22px; flex: none; padding: 2px 0 0 9px; gap: 12px; background: #f2f2f2; border-bottom: 4px solid #c80000; }
.brand { margin-left: auto; margin-right: 6px; font: 700 17px/20px "DejaVu Sans Mono", monospace; color: #2a2a2a; }
.macron { position: relative; }
.macron::after { content: ""; position: absolute; left: 2px; top: 3px; width: 7px; height: 2px; background: #e03030; }

.toolbar { display: flex; height: 30px; flex: none; margin-top: 1px; }
.menubar + .toolbar { margin-top: 4px; height: 29px; }
.group { display: flex; align-items: center; box-sizing: border-box; background: linear-gradient(#ececec, #b8b8b8); border-bottom: 1px solid #858585; border-right: 1px solid #999; border-radius: 0 0 4px 4px; }
.grow { flex: 1; }
.grip { width: 5px; height: 18px; margin-left: 2px; background: repeating-linear-gradient(90deg, #8a8a8a 0 1px, #eee 1px 2px); }
.tool { width: 31px; height: 30px; display: flex; align-items: center; justify-content: center; }
.tool svg { width: 22px; height: 22px; }
.tool.on { background: #c2c2c2; border-radius: 4px; box-shadow: inset 0 0 2px #999; }
.dim { opacity: .6; }
.sep { width: 1px; height: 18px; background: #777; margin: 0 1px; }
.tail { width: 6px; }
.more { width: 14px; margin-left: 9px; text-align: center; font-size: 16px; }
.more.far { margin-left: 26px; }
.more.mid { margin-left: 16px; }
.combo { display: flex; align-items: center; box-sizing: border-box; background: #fff; border-radius: 4px; overflow: hidden; box-shadow: inset 0 0 0 1px #b0b0b0; }
.combo select { appearance: none; flex: 1; min-width: 0; height: 100%; padding-left: 4px; }
.drop { align-self: stretch; width: 16px; background: linear-gradient(#a80000, #d40000 60%, #b00000); position: relative; }
.drop::after { content: ""; position: absolute; left: 4px; top: 8px; border: 4px solid transparent; border-top-color: #fff; border-bottom: 0; }
.wide { width: 145px; height: 21px; margin-left: 2px; }
.rule { width: 117px; height: 21px; margin: 0 2px; }
.tri { border: 4px solid transparent; border-top: 5px solid #c80000; border-bottom: 0; }
.group > .tri { margin: 0 3px; }
.status .first { margin-left: 4px; }
.st { margin-right: 10px; }
.status .bar { width: 1px; height: 18px; background: #777; margin: 0 2px 0 -7px; }
.status label { display: flex; align-items: center; gap: 2px; }
.status input { width: 65px; height: 22px; padding-left: 4px; background: #fff; border: 1px solid #b4b4b4; border-top: 1px solid #888; border-radius: 3px; }
.dist { margin-left: 6px; }

.body { flex: 1; display: flex; min-height: 0; margin-top: 2px; }
.side { width: 175px; flex: none; display: flex; flex-direction: column; margin-top: -3px; }
.split { width: 7px; flex: none; background: #d8dadd; border-left: 1px solid #999; border-right: 1px solid #777; box-sizing: border-box; }
.dock { display: flex; align-items: center; height: 20px; flex: none; box-sizing: border-box; padding-left: 13px; gap: 2px; background: linear-gradient(#f2f2f2, #bdbdbd); border: 1px solid #888; }
.dock b { flex: 1; }
.dock button { width: 13px; height: 13px; border-radius: 3px; box-shadow: 0 0 0 1px #aaa; background: #eee; font-weight: 700; line-height: 12px; }
.dock svg { display: block; width: 13px; height: 13px; fill: none; stroke: #111; stroke-width: 2; }
.full { height: 20px; flex: none; border-radius: 0; margin-right: 1px; }
.full.combo { background: linear-gradient(#fff, #e8e8e8); border-radius: 0 3px 3px 0; }
.lead { margin-left: 3px; flex: none; }
.chip { width: 12px; height: 12px; border: 1px solid #9400e6; background: #000; outline: 1px solid #000; margin-left: 4px; }
.checks { display: flex; align-items: center; height: 22px; gap: 6px; padding-left: 1px; }
.checks label { display: flex; align-items: center; gap: 5px; }
input[type="checkbox"] { appearance: none; flex: none; width: 12px; height: 12px; background: linear-gradient(#fff, #ddd); border-bottom: 1px solid #555; box-shadow: 0 0 0 1px #ddd; }
input[type="checkbox"]:checked { background: linear-gradient(#fff, #ddd); background-image: url("data:image/svg+xml,%3Csvg xmlns='http://www.w3.org/2000/svg' viewBox='0 0 12 12'%3E%3Cpath d='M2 5l3 4 6-7' stroke='%23c80000' stroke-width='3' fill='none'/%3E%3C/svg%3E"); }
.filter { display: flex; align-items: center; height: 20px; gap: 3px; padding-left: 1px; }
.pill { width: 29px; height: 19px; border-radius: 9px; background: linear-gradient(#fff, #ccc); box-shadow: inset 0 0 0 1px #999; }
.search { width: 123px; height: 19px; }
.search input { flex: 1; min-width: 0; padding-left: 3px; }
.search input::placeholder { color: #bbb; }
.filter .tri { margin-left: 4px; }
.vis { display: flex; height: 23px; flex: none; align-items: center; justify-content: space-between; padding: 0 1px 0 10px; }
.vis button { display: flex; align-items: center; gap: 11px; }
.list { flex: 1; display: flex; min-height: 0; overflow: hidden; background: #fff; border: 1px solid #000; border-width: 1px 1px 0 1px; }
table { border-collapse: collapse; border-spacing: 0; table-layout: fixed; }
.list table { width: 156px; flex: none; align-self: flex-start; }
.list th { height: 17px; padding: 0; font-weight: 400; background: linear-gradient(#bbb, #999); border-right: 1px solid #666; border-left: 1px solid #ccc; }
.c0 { width: 17px; } .c1 { width: 65px; } .c2 { width: 30px; } .c3 { width: 22px; } .c4 { width: 22px; }
.up { width: 0; margin: 0 auto; border: 4px solid transparent; border-top: 0; border-bottom: 5px solid #eee; }
.list td { padding: 0; height: 17px; line-height: 16px; }
.list tr.sel { outline: 2px solid #000; outline-offset: -2px; }
.sw { display: block; margin-left: 2px; }
.list .nm { padding-left: 3px; }
.list .pu { padding-left: 4px; }
.ck input { display: block; margin: 0 auto; }
.scroll { width: 17px; margin-left: auto; display: flex; flex-direction: column; background: #919191; }
.sbtn { height: 16px; background: linear-gradient(#f4f4f4, #ccc); border-bottom: 1px solid #555; position: relative; }
.sbtn::after { content: ""; position: absolute; left: 4px; top: 5px; border: 4px solid transparent; border-top: 0; border-bottom: 7px solid #fff; filter: drop-shadow(0 0 1px #666); }
.sbtn.down { margin-top: auto; transform: rotate(180deg); }
.thumb { height: 27px; border: 1px solid #777; border-radius: 8px; background: repeating-linear-gradient(#777 0 1px, #ccc 1px 2px) center / 6px 9px no-repeat #b8b8b8; }
.thumb.tall { height: 247px; }

.canvas { flex: 1; min-width: 0; background: #000; overflow: hidden; }
.art { display: block; }
.pins { fill: #fff; font-family: "DejaVu Sans", sans-serif; font-weight: 200; font-size: 24px; }
.pins .big { font-family: Inter, "DejaVu Sans", sans-serif; font-weight: 100; font-size: 70px; }

.panel { position: absolute; left: 444px; top: 0; width: 282px; height: 41px; box-sizing: border-box; display: flex; align-items: center; justify-content: space-between; padding: 0 4px; background: #31363a; border-bottom: 1px solid #1a1d20; border-right: 1px solid #1a1d20; }
.dotgrip { width: 5px; height: 20px; background: radial-gradient(circle, #585d60 1px, transparent 1px) 0 0 / 3px 4px; }
.psep { width: 1px; height: 28px; background: #282c30; }
.panel .scr { margin: 0 2px; }

.win { position: absolute; box-sizing: border-box; background: #efefef; border: 2px solid #31363a; border-radius: 5px 5px 2px 2px; }
.win header { display: flex; align-items: center; height: 27px; flex: none; background: linear-gradient(#8c8e8f, #4b5051 17px, #31363a 17px); margin: 0 -1px; padding-left: 4px; border-radius: 3px 3px 0 0; }
.wicon { width: 18px; height: 13px; background: #f0f0ec; border: 1px solid #ccc; border-top: 3px solid #4a78b8; }
.vlw { left: 385px; top: 180px; width: 403px; height: 282px; display: flex; flex-direction: column; }
.vlw header b { flex: 1; text-align: center; color: #9ba0a1; font-size: 12px; padding-left: 64px; padding-right: 64px; }
.vlw header .wctl { margin-right: 10px; }
.vlw header .wctl svg { stroke: #5c6162; }
.vlw nav { display: flex; align-items: center; gap: 12px; height: 22px; flex: none; padding: 2px 0 0 9px; background: #f2f2f2; border-bottom: 4px solid #c80000; }
.vlw .brand { margin-right: 8px; }
.vlw h2 { margin: 0; height: 22px; flex: none; font-size: 11px; font-weight: 400; line-height: 24px; text-align: center; }
.vrow { display: flex; align-items: center; gap: 3px; height: 25px; flex: none; }
.vrow span { flex: 1; }
.vrow button { width: 40px; height: 22px; border-radius: 10px; background: linear-gradient(#fff, #d4d4d4); border: 1px solid #bbb; border-bottom: 2px solid #888; }
.vlist { flex: 1; min-height: 0; display: flex; overflow: hidden; background: #a0a0a4; margin: 1px 2px 2px 1px; border-top: 2px solid #222; border-left: 1px solid #000; }
.vlist table { flex: 1; align-self: flex-start; }
.vlist td { height: 16px; line-height: 16px; padding: 0 0 1px 3px; border-bottom: 1px solid #c8c8c8; border-right: 1px solid #c8c8c8; }
.vlist .a { width: 18px; }
.vlist .b { width: 32px; padding: 0 6px 1px 0; text-align: center; box-sizing: border-box; }
.drc { left: 1178px; top: 604px; width: 205px; height: 115px; display: flex; flex-direction: column; }
.drc header { justify-content: space-between; }
.lit { height: 24px; align-items: center; margin-right: 0; padding: 0 10px; background: linear-gradient(#55595b, #2b2f33 17px); border-radius: 0 3px 0 8px; }
.msg { display: flex; gap: 7px; padding: 8px 0 0 10px; height: 38px; }
.msg p { margin: 2px 0; }
.close { align-self: center; width: 55px; height: 19px; margin-top: 7px; border-radius: 8px; background: #c00000; border: 1px solid #900; color: #fff; font-weight: 700; padding: 1px; }
.close span { display: block; line-height: 13px; border: 1px dotted #fff; border-radius: 5px; }
.cursor { position: absolute; left: 72px; top: 53px; }
</style>
